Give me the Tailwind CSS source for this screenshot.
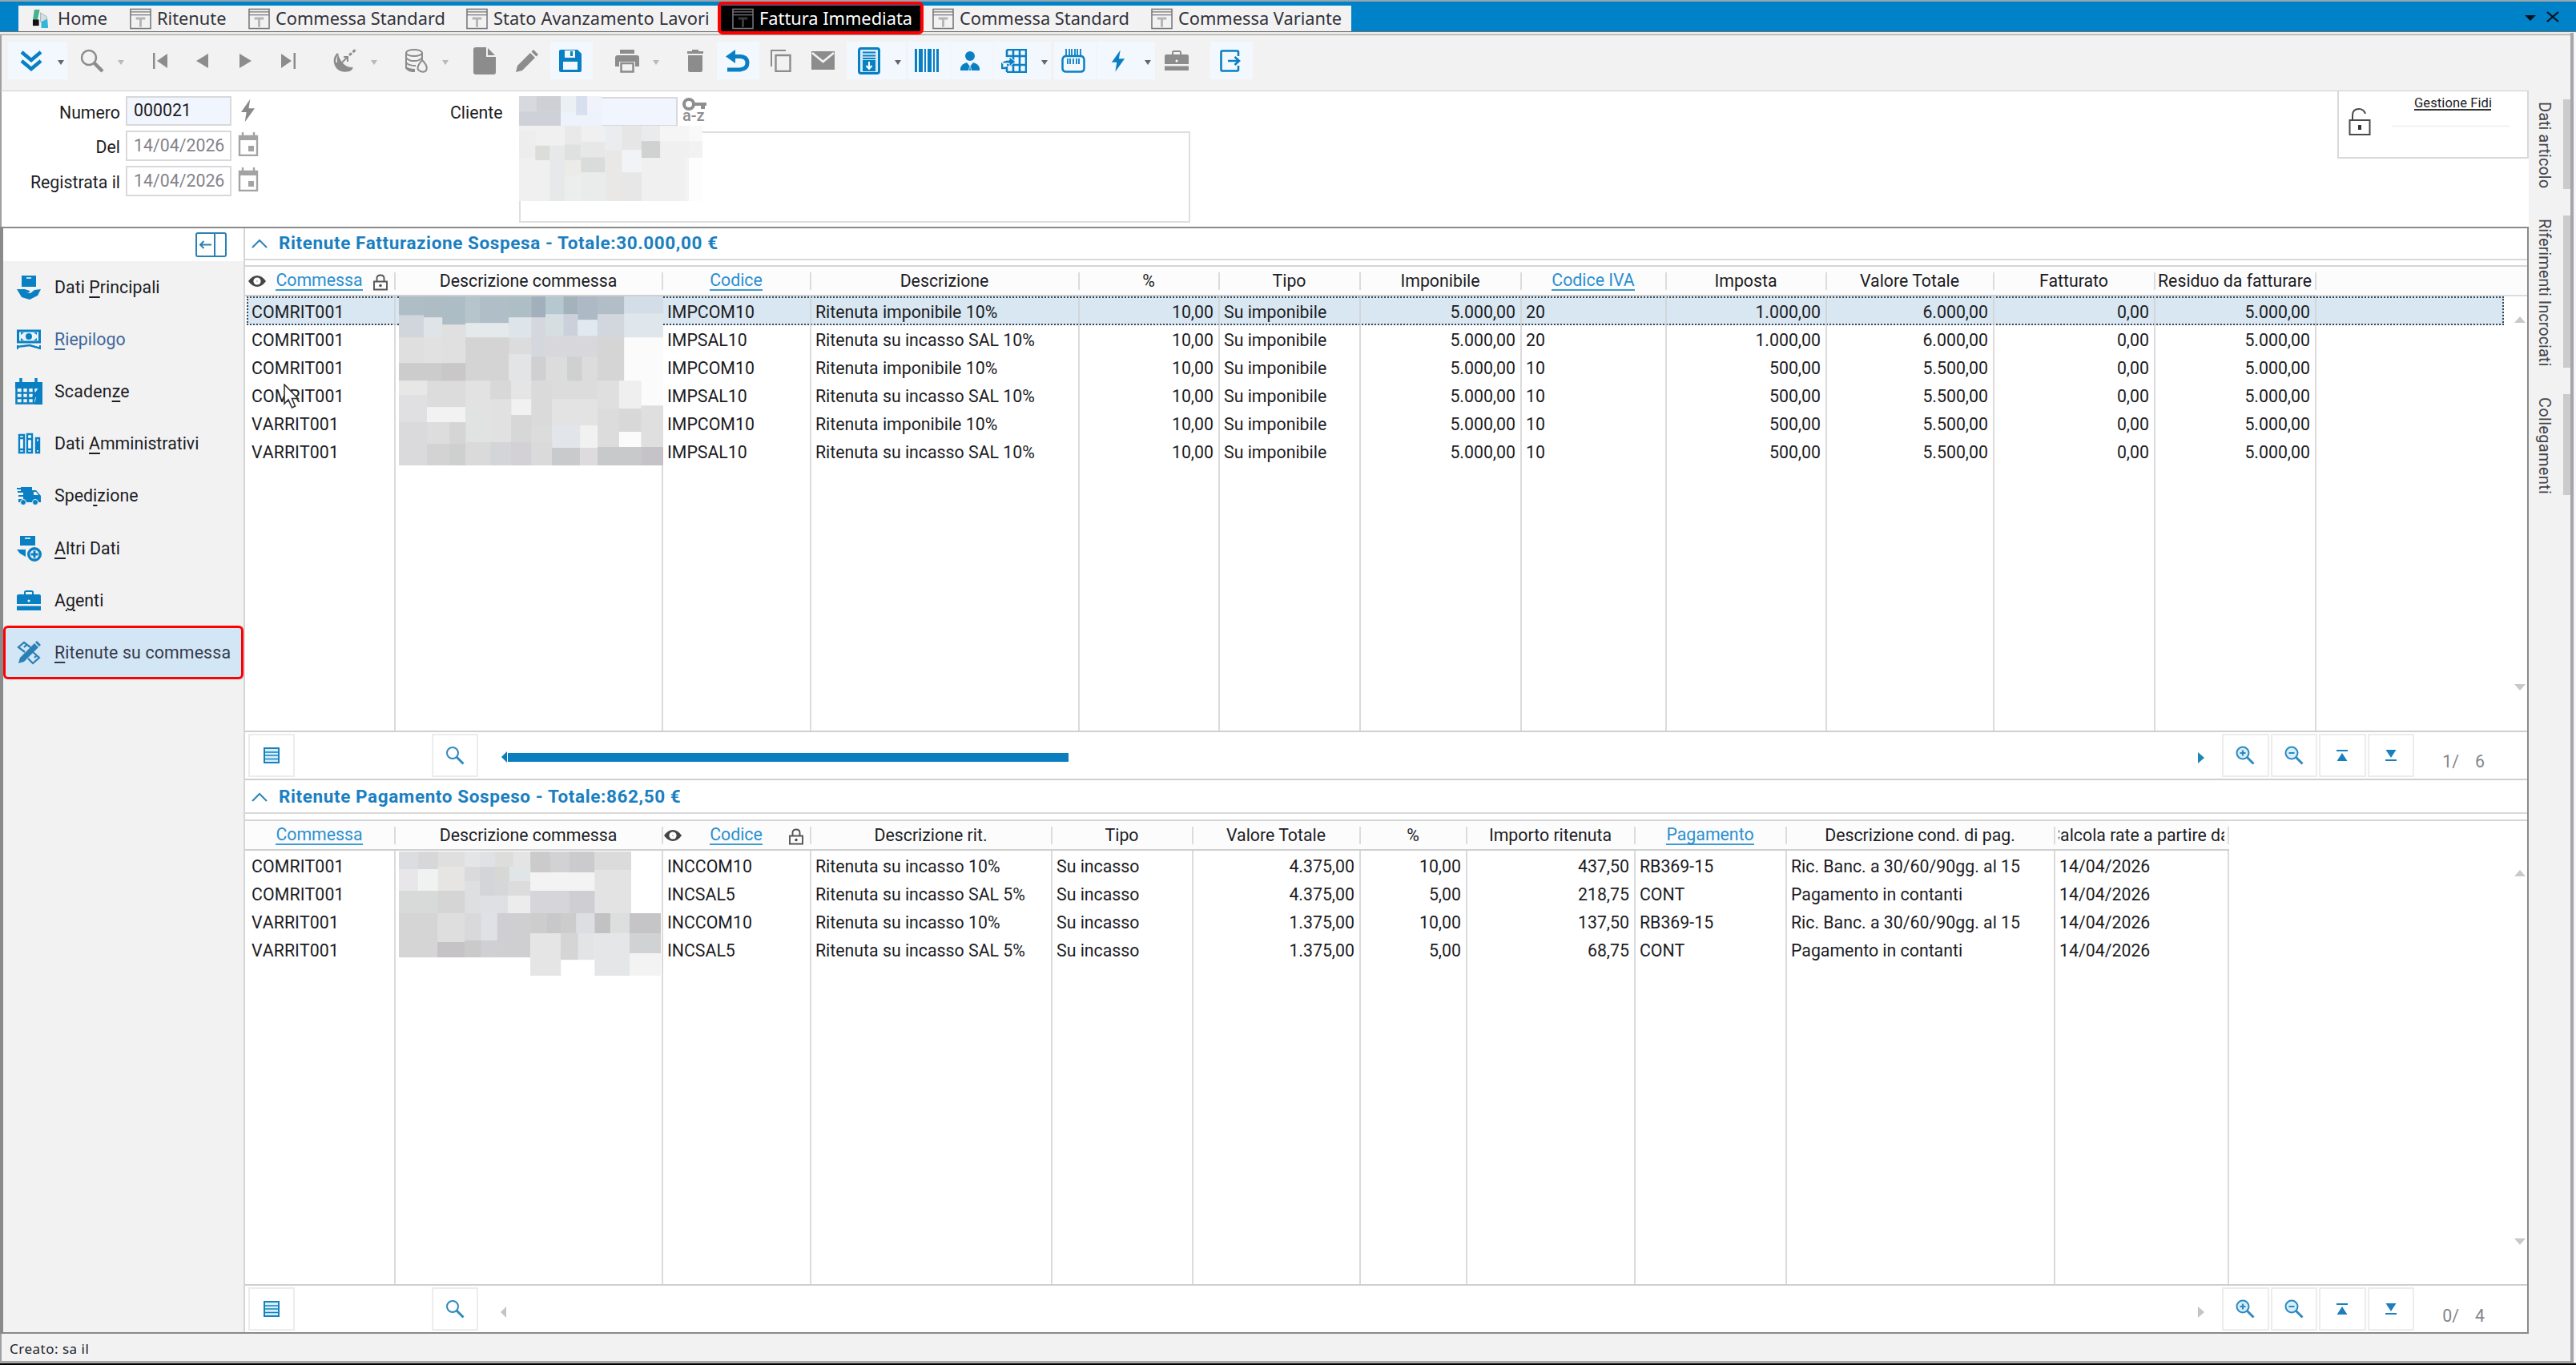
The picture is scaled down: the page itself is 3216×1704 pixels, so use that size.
<!DOCTYPE html>
<html lang="it">
  <head>
    <meta charset="UTF-8" />
    <meta name="viewport" content="width=device-width, initial-scale=1" />
    <title>Fattura Immediata</title>
    <script src="https://cdn.jsdelivr.net/npm/@tailwindcss/browser@4"></script>
  </head>
  <body class="bg-white">
    <!-- shared symbols -->
    <svg class="hidden">
      <symbol id="form" viewBox="0 0 28 27">
        <rect x="1" y="1" width="26" height="25" fill="none" stroke="currentColor" stroke-width="1.6" />
        <path d="M1 4.5H27M1 8.5H27" stroke="currentColor" stroke-width="1.4" />
        <path d="M8 13H20M14 13V24" stroke="currentColor" stroke-width="3" opacity=".5" />
      </symbol>
      <symbol id="bolt" viewBox="0 0 20 30"><path d="M13 0L1 17H8L6 30L19 12H11Z" fill="currentColor" /></symbol>
      <symbol id="calendar" viewBox="0 0 26 30">
        <path d="M2 5H24V29H2Z" fill="none" stroke="currentColor" stroke-width="2.4" />
        <path d="M1 4H25V10H1Z" fill="currentColor" />
        <path d="M6 0V5M20 0V5" stroke="currentColor" stroke-width="2.4" />
        <path d="M13 17H20V24H13Z" fill="currentColor" />
      </symbol>
      <symbol id="briefcase" viewBox="0 0 30 26">
        <path d="M10 5V2.5Q10 1 11.500 1H18.500Q20 1 20 2.500V5" fill="none" stroke="currentColor" stroke-width="2" />
        <path d="M2 5H28Q30 5 30 7V17H0V7Q0 5 2 5ZM0 19.500H30V25H0Z" fill="currentColor" />
        <circle cx="15" cy="13" r="1.500" fill="#fff" />
      </symbol>
      <symbol id="list" viewBox="0 0 20 20">
        <rect x="1" y="1" width="18" height="18" fill="#d3effb" stroke="#1681bd" stroke-width="2" />
        <path d="M1 6H19M1 10H19M1 14.500H19" stroke="#1681bd" stroke-width="1.700" />
      </symbol>
      <symbol id="search" viewBox="0 0 24 24">
        <circle cx="9" cy="9" r="7" fill="none" stroke="#2f88c0" stroke-width="2" />
        <path d="M14 14L22.500 22.500" stroke="#2f88c0" stroke-width="3" />
      </symbol>
      <symbol id="zoom-in" viewBox="0 0 24 24">
        <circle cx="9" cy="9" r="7.500" fill="#d5effb" stroke="#2f88c0" stroke-width="2" />
        <path d="M5.500 9H12.500M9 5.500V12.500" stroke="#2f88c0" stroke-width="2.200" />
        <path d="M14.500 14.500L22.500 22.500" stroke="#2f88c0" stroke-width="3" />
      </symbol>
      <symbol id="zoom-out" viewBox="0 0 24 24">
        <circle cx="9" cy="9" r="7.500" fill="#d5effb" stroke="#2f88c0" stroke-width="2" />
        <path d="M5.500 9H12.500" stroke="#2f88c0" stroke-width="2" />
        <path d="M14.500 14.500L22.500 22.500" stroke="#2f88c0" stroke-width="3" />
      </symbol>
      <symbol id="to-top" viewBox="0 0 14 14"><path d="M0 0H14V2H0ZM7 4L13.500 14H.5Z" fill="#1b7fbd" /></symbol>
      <symbol id="to-bottom" viewBox="0 0 14 14"><path d="M0 12H14V14H0ZM7 10L13.500 0H.5Z" fill="#1b7fbd" /></symbol>
      <symbol id="eye" viewBox="0 0 22 16">
        <path d="M0 8Q5 1 11 1T22 8Q17 15 11 15T0 8Z" fill="#444" />
        <circle cx="11" cy="8" r="4.600" fill="#fff" />
        <circle cx="11" cy="8" r="1" fill="#bbb" />
      </symbol>
      <symbol id="lock" viewBox="0 0 18 20">
        <path d="M1 9H17V19H1ZM4.500 9V5Q4.500 1 9 1T13.500 5V9" fill="none" stroke="#555" stroke-width="1.900" />
        <circle cx="9" cy="14" r="1.700" fill="#444" />
      </symbol>
      <symbol id="chevron" viewBox="0 0 20 12"><path d="M1 11L10 2L19 11" fill="none" stroke="#2c83bc" stroke-width="2" /></symbol>
    </svg>

    <div class="relative flex h-[1704px] w-[3216px] flex-col overflow-hidden border-t-2 border-[#9aa5aa] bg-[#f2f2f2] font-[Roboto,sans-serif] text-[21.3px] whitespace-nowrap text-[#1c1c24]">
      <!-- tabs -->
      <div class="flex h-[37px] shrink-0 bg-[#0082c8] pl-[23px]">
        <nav class="mt-[5px] flex h-8 w-[1664px] items-center bg-[#f2f2f2] font-['Noto_Sans',sans-serif] text-[21.800px] text-[#33333a]" id="tabs">
          <div class="flex w-[129px] items-center pl-[17px]">
            <svg class="mr-[9px] size-[23px]" viewBox="0 0 22 24"><path d="M2 0H9L6 14H0Z" fill="#44b38b" /><path d="M0 13H8V21H0Z" fill="#111" /><path d="M10 4L18 9V16H10Z" fill="#d8dcda" stroke="#9bb" /><path d="M11 16L19 12L20 24H11Z" fill="#33b6dc" /></svg>
            <span>Home</span>
          </div>
          <div class="flex w-[148px] items-center pl-[10px]"><svg class="mr-[7px] h-[27px] w-[27px] text-[#77777b]"><use href="#form" /></svg>Ritenute</div>
          <div class="flex w-[272px] items-center pl-[10px]"><svg class="mr-[7px] h-[27px] w-[27px] text-[#77777b]"><use href="#form" /></svg>Commessa Standard</div>
          <div class="flex w-[328px] items-center pl-[10px] tracking-[0.1px]"><svg class="mr-[7px] h-[27px] w-[27px] text-[#77777b]"><use href="#form" /></svg>Stato Avanzamento Lavori</div>
          <div class="relative flex h-8 w-[249px] items-center bg-black pl-[14px] text-white"><svg class="mr-[7px] h-[27px] w-[27px] text-[#77777b]"><use href="#form" /></svg>Fattura Immediata
            <div class="absolute -inset-x-[4px] -top-[5px] -bottom-[4px] rounded-md border-4 border-[#f00]"></div>
          </div>
          <div class="flex w-[272px] items-center pl-[15px]"><svg class="mr-[7px] h-[27px] w-[27px] text-[#77777b]"><use href="#form" /></svg>Commessa Standard</div>
          <div class="flex items-center pl-[16px]"><svg class="mr-[7px] h-[27px] w-[27px] text-[#77777b]"><use href="#form" /></svg>Commessa Variante</div>
        </nav>
        <div class="mr-[21px] ml-auto flex items-center gap-[13px]">
          <svg class="mt-1 h-[7px] w-[14px]" viewBox="0 0 14 7"><path d="M0 0H14L7 7Z" fill="#04121c" /></svg>
          <svg class="h-[14px] w-4" viewBox="0 0 16 14"><path d="M1 1L15 13M15 1L1 13" stroke="#04121c" stroke-width="2.200" /></svg>
        </div>
      </div>
      <div class="h-[5px] shrink-0 border-t border-b border-t-[#6f6f6f] border-b-[#9c9c9c] bg-[#e9e9e6]"></div>

      <!-- toolbar -->
      <div class="flex h-[69px] shrink-0 items-start border-l-2 border-[#a0a0a0] pt-[8px] pl-2 text-[#8c8c8c]">
        <div class="flex h-[47px] w-[74px] items-center bg-[#f3f8fe]">
          <div class="flex w-[58px] justify-center"><svg class="h-[26px] w-[28px]" viewBox="0 0 28 26"><path d="M2 2L14 12L26 2M2 13L14 23L26 13" fill="none" stroke="#0a80c4" stroke-width="4.500" /></svg></div>
          <svg class="mt-1 ml-1 h-[6px] w-2" viewBox="0 0 8 6"><path d="M0 0H8L4 6Z" fill="#666" /></svg>
        </div>
        <div class="ml-[3px] flex h-[47px] w-[74px] items-center">
          <div class="flex w-[56px] justify-center"><svg class="size-[30px]" viewBox="0 0 30 30"><circle cx="11" cy="11" r="9" fill="none" stroke="currentColor" stroke-width="2.500" /><path d="M17.500 17.500L28 28" stroke="currentColor" stroke-width="4.500" /></svg></div>
          <svg class="mt-1 ml-1 h-[6px] w-2" viewBox="0 0 8 6"><path d="M0 0H8L4 6Z" fill="#b9b9b9" /></svg>
        </div>
        <div class="ml-3 flex h-[47px] w-[53px] items-center justify-center"><svg class="h-[20px] w-[20px]" viewBox="0 0 20 20"><path d="M1 0H3.500V20H1ZM19 1V19L6 10Z" fill="currentColor" /></svg></div>
        <div class="flex h-[47px] w-[53px] items-center justify-center"><svg class="h-[20px] w-[16px]" viewBox="0 0 16 20"><path d="M15 1V19L0 10Z" fill="currentColor" /></svg></div>
        <div class="flex h-[47px] w-[53px] items-center justify-center"><svg class="h-[20px] w-[16px]" viewBox="0 0 16 20"><path d="M1 1V19L16 10Z" fill="currentColor" /></svg></div>
        <div class="flex h-[47px] w-[55px] items-center justify-center"><svg class="h-[20px] w-[20px]" viewBox="0 0 20 20"><path d="M19 0H16.500V20H19ZM1 1V19L14 10Z" fill="currentColor" /></svg></div>
        <div class="ml-4 flex h-[47px] w-[74px] items-center">
          <!-- satellite dish -->
          <div class="flex w-[56px] justify-center"><svg class="size-[30px]" viewBox="0 0 30 30"><path d="M6 6Q-1 13 4 22Q8 29 19 27Q24 25 23 23" fill="none" stroke="currentColor" stroke-width="2.500" /><path d="M2 17Q4 28 19 28L23 23Q12 23 6 7Q4 12 5 17Z" fill="currentColor" /><path d="M11 17L17 11M13 10H18V16" fill="none" stroke="currentColor" stroke-width="2" /><path d="M20 8L29 0" stroke="currentColor" stroke-width="3" stroke-dasharray="4 2" /></svg></div>
          <svg class="mt-1 ml-1 h-[6px] w-2" viewBox="0 0 8 6"><path d="M0 0H8L4 6Z" fill="#b9b9b9" /></svg>
        </div>
        <div class="ml-[15px] flex h-[47px] w-[74px] items-center">
          <!-- database -->
          <div class="flex w-[56px] justify-center"><svg class="size-[30px]" viewBox="0 0 30 30"><g fill="none" stroke="currentColor" stroke-width="2"><ellipse cx="12" cy="5" rx="10" ry="4" /><path d="M2 5V24Q5 28 13 28M22 5V13M2 11Q5 15 12 15T22 11M2 17Q5 21 14 21M2 23Q5 26 13 26" /><path d="M22 14Q15 22 17 26Q21 30 26 28Q31 23 22 14Z" /></g></svg></div>
          <svg class="mt-1 ml-1 h-[6px] w-2" viewBox="0 0 8 6"><path d="M0 0H8L4 6Z" fill="#b9b9b9" /></svg>
        </div>
        <div class="ml-3 flex h-[47px] w-[53px] items-center justify-center"><svg class="h-[34px] w-[28px]" viewBox="0 0 28 34"><path d="M3 0H16V12H28V31Q28 34 25 34H3Q0 34 0 31V3Q0 0 3 0ZM18 1L27 10H18Z" fill="currentColor" /></svg></div>
        <div class="flex h-[47px] w-[53px] items-center justify-center"><svg class="size-[28px]" viewBox="0 0 28 28"><path d="M0 28L2 20L18 4L24 10L8 26ZM19.500 2.500L22 0L28 6L25.500 8.500Z" fill="currentColor" /></svg></div>
        <div class="ml-[3px] flex h-[47px] w-[53px] items-center justify-center bg-[#f3f8fe]"><svg class="mr-[3px] size-[28px]" viewBox="0 0 28 28"><path d="M2 0H23L28 5V26Q28 28 26 28H2Q0 28 0 26V2Q0 0 2 0Z" fill="#0a80c4" /><path d="M7 1H20V10H7ZM5 15H23V25H5Z" fill="#f3f8fe" /><path d="M14 2H17V8H14Z" fill="#0a80c4" /></svg></div>
        <div class="ml-[15px] flex h-[47px] w-[74px] items-center">
          <div class="flex w-[56px] justify-center"><svg class="size-[30px]" viewBox="0 0 30 30"><path d="M6 1H24V6H6ZM3 8H27Q30 8 30 11V22H25V16H5V22H0V11Q0 8 3 8Z" fill="currentColor" /><path d="M7.500 18H22.500V28.500H7.500Z" fill="none" stroke="currentColor" stroke-width="2.500" /></svg></div>
          <svg class="mt-1 ml-1 h-[6px] w-2" viewBox="0 0 8 6"><path d="M0 0H8L4 6Z" fill="#b9b9b9" /></svg>
        </div>
        <div class="ml-3 flex h-[47px] w-[53px] items-center justify-center"><svg class="h-[28px] w-[20px]" viewBox="0 0 20 28"><path d="M0 2H6V0H14V2H20V5H0ZM1 7H19V25Q19 28 17 28H3Q1 28 1 25Z" fill="currentColor" /></svg></div>
        <div class="ml-px flex h-[47px] w-[53px] items-center justify-center bg-[#f3f8fe]"><svg class="mr-[2px] h-[28px] w-[30px]" viewBox="0 0 30 28"><path d="M2 25H18Q27 24 27 16.500T18 8.500H8" fill="none" stroke="#0a80c4" stroke-width="5" /><path d="M0 8.500L12 0V17Z" fill="#0a80c4" /></svg></div>
        <div class="flex h-[47px] w-[53px] items-center justify-center"><svg class="h-[28px] w-[26px]" viewBox="0 0 26 28"><path d="M1 21V1H19" fill="none" stroke="currentColor" stroke-width="2" /><path d="M6.500 7H24.500V27H6.500Z" fill="none" stroke="currentColor" stroke-width="2.400" /></svg></div>
        <div class="flex h-[47px] w-[53px] items-center justify-center"><svg class="h-[23px] w-[29px]" viewBox="0 0 29 23"><path d="M0 0H29V23H0Z" fill="currentColor" /><path d="M1 2L14.500 13L28 2" fill="none" stroke="#f2f2f2" stroke-width="2.600" /></svg></div>
        <div class="ml-[3px] flex h-[47px] w-[74px] items-center bg-[#f3f8fe]">
          <div class="flex w-[56px] justify-center"><svg class="h-[34px] w-[28px]" viewBox="0 0 28 34"><path d="M4 1.500H24Q26.500 1.500 26.500 4V30Q26.500 32.500 24 32.500H4Q1.500 32.500 1.500 30V4Q1.500 1.500 4 1.500Z" fill="#d7ebf8" stroke="#0a80c4" stroke-width="3" /><path d="M6 6.500H22M6 10.500H22M6 14H22" stroke="#0a80c4" stroke-width="2" /><path d="M6 16H22V30H6Z" fill="#0a80c4" /><path d="M14 18V26M10.500 23L14 27L17.500 23" fill="none" stroke="#fff" stroke-width="2" /></svg></div>
          <svg class="mt-1 ml-1 h-[6px] w-2" viewBox="0 0 8 6"><path d="M0 0H8L4 6Z" fill="#666" /></svg>
        </div>
        <div class="ml-[2px] flex h-[47px] w-[53px] items-center justify-center bg-[#f3f8fe]"><svg class="mr-[5px] h-[29px] w-[30px]" viewBox="0 0 30 29"><path d="M0 0H3V29H0ZM5 0H10V29H5ZM12 0H14V29H12ZM16 0H21V29H16ZM23 0H25V29H23ZM27 0H30V29H27Z" fill="#0a80c4" /></svg></div>
        <div class="ml-px flex h-[47px] w-[53px] items-center justify-center bg-[#f3f8fe]"><svg class="mr-[5px] size-[24px]" viewBox="0 0 24 24"><circle cx="12" cy="6" r="6" fill="#0a80c4" /><path d="M0 24V21Q1 16 8 14L12 19L16 14Q23 16 24 21V24Z" fill="#0a80c4" /><path d="M12 15L14 24H10Z" fill="#f3f8fe" /><path d="M12 17L13 24H11Z" fill="#0a80c4" /></svg></div>
        <div class="ml-px flex h-[47px] w-[71px] items-center bg-[#f3f8fe]">
          <div class="flex w-[50px] justify-center"><svg class="h-[30px] w-[32px]" viewBox="0 0 32 30"><path d="M7 1H31V29H7M7 9H31M7 20H31M15 1V29M23 1V29M7 1V10M7 22V29M1 17V24H7" fill="none" stroke="#0a80c4" stroke-width="2.600" /><path d="M1 18Q2 14 10 14V10L18 16L10 22V18Z" fill="#0a80c4" stroke="#f3f8fe" /></svg></div>
          <svg class="mt-1 ml-[9px] h-[6px] w-2" viewBox="0 0 8 6"><path d="M0 0H8L4 6Z" fill="#666" /></svg>
        </div>
        <div class="ml-1 flex h-[47px] w-[52px] items-center justify-center bg-[#f3f8fe]"><svg class="mr-[4px] size-[30px]" viewBox="0 0 30 30"><path d="M6 0V10M10 0V10M13 0V10M17 0V10M20 0V10M24 0V10M8 12V19M11 12V19M15 12V19M19 12V19M22 12V19" stroke="#0a80c4" stroke-width="1.800" /><path d="M5 9H25Q28.500 10 28.500 14V24Q28.500 28.500 24 28.500H6Q1.500 28.500 1.500 24V14Q1.500 10 5 9Z" fill="none" stroke="#0a80c4" stroke-width="2.500" /></svg></div>
        <div class="ml-px flex h-[47px] w-[73px] items-center bg-[#f3f8fe]">
          <div class="flex w-[56px] justify-center"><svg class="mr-[2px] h-[28px] w-[18px] text-[#0a80c4]"><use href="#bolt" /></svg></div>
          <svg class="mt-1 ml-1 h-[6px] w-2" viewBox="0 0 8 6"><path d="M0 0H8L4 6Z" fill="#666" /></svg>
        </div>
        <div class="flex h-[47px] w-[53px] items-center justify-center"><svg class="h-[26px] w-[30px]"><use href="#briefcase" /></svg></div>
        <div class="ml-4 flex h-[47px] w-[53px] items-center justify-center bg-[#f3f8fe]"><svg class="mr-[3px] h-[28px] w-[26px]" viewBox="0 0 26 28"><path d="M23 8V3Q23 1.500 21.500 1.500H3Q1.500 1.500 1.500 3V25Q1.500 26.500 3 26.500H21.500Q23 26.500 23 25V20" fill="none" stroke="#0a80c4" stroke-width="2.600" /><path d="M10 14H24M18.500 9L24 14L18.500 19" fill="none" stroke="#0a80c4" stroke-width="2.600" /></svg></div>
      </div>

      <div class="flex h-[1552px] shrink-0">
        <div class="flex w-[3157px] shrink-0 flex-col">
          <!-- document header -->
          <div class="flex h-[170px] shrink-0 border-t border-l-2 border-t-[#cfcfcf] border-l-[#a0a0a0] bg-white">
            <div class="flex flex-col pt-[6px]">
              <div class="flex h-[43px]"><div class="w-[148px] pt-[5px] text-right">Numero</div><div class="ml-[7px] h-[37px] w-[132px] border-2 border-[#d9d9dc] bg-[#f1f5fd] pl-2">000021</div><svg class="mt-[3px] ml-[11px] h-[30px] w-[19px] text-[#8a8a8a]"><use href="#bolt" /></svg></div>
              <div class="flex h-[44px]"><div class="w-[148px] pt-[5px] text-right">Del</div><div class="ml-[7px] h-[38px] w-[132px] border-2 border-[#d9d9dc] pt-[1px] pl-[8px] text-[#83838a]">14/04/2026</div><svg class="mt-[2px] ml-[8px] h-[30px] w-[26px] text-[#a3a3a3]"><use href="#calendar" /></svg></div>
              <div class="flex h-[44px]"><div class="w-[148px] pt-[5px] text-right">Registrata il</div><div class="ml-[7px] h-[38px] w-[132px] border-2 border-[#d9d9dc] pt-[1px] pl-[8px] text-[#83838a]">14/04/2026</div><svg class="mt-[2px] ml-[8px] h-[30px] w-[26px] text-[#a3a3a3]"><use href="#calendar" /></svg></div>
            </div>
            <div class="mt-[11px] ml-auto w-[66px] pr-0">Cliente</div>
            <div class="relative mt-[7px] ml-[20px] w-[838px]">
              <div class="flex h-[43px]">
                <div class="h-[37px] w-[198px] border-2 border-[#d9d9dc] bg-[#f1f5fd]"></div>
                <div class="ml-[6px] flex w-[30px] flex-col text-[#8e8e8e]">
                  <svg class="mt-[1px] h-[16px] w-[30px]" viewBox="0 0 30 16"><circle cx="8" cy="8" r="6" fill="none" stroke="currentColor" stroke-width="4" /><path d="M14 6H30V10H28V14H23V10H14Z" fill="currentColor" /></svg>
                  <span class="-mt-[4px] text-[20px] leading-[20px] font-medium">a-z</span>
                </div>
              </div>
              <div class="h-[114px] border-2 border-[#dedede]"></div>
              <svg class="absolute -top-[1px] left-0 h-[131px] w-[229px]" viewBox="1181 360 418 392" preserveAspectRatio="none" id="customer-mask"></svg>
            </div>
            <div class="ml-[1432px] flex h-[84px] w-[239px] border-2 border-t-0 border-[#d9d9dc]">
              <svg class="mt-[20px] ml-[12px] h-[36px] w-[28px]" viewBox="0 0 28 36"><path d="M1.500 16H26.500V34H1.500ZM5 16V10Q5 2 13 2Q19 2 21 8" fill="none" stroke="#4a4a4a" stroke-width="2" /><path d="M12 22H16V28H12Z" fill="#333" /></svg>
              <div class="pt-[4px]">
                <div class="ml-[54px] h-[20px] w-[96px] border-b-2 border-[#333] text-[16.500px] leading-[22px] tracking-[0.1px]">Gestione Fidi</div>
                <div class="mt-[18px] ml-[26px] h-[3px] w-[148px] bg-[#f6f6f6]"></div>
              </div>
            </div>
          </div>

          <div class="flex h-[1382px] border-t-2 border-r-2 border-b-2 border-l-4 border-[#8a8a8a] bg-white">
            <!-- sections menu -->
            <aside class="flex w-[302px] shrink-0 flex-col border-r-2 border-[#d5d5d5] bg-[#f2f2f2] tracking-[0.050px]">
              <div class="h-[41px] bg-white">
                <svg class="mt-[5px] ml-[240px] h-[31px] w-[39px]" viewBox="0 0 39 31"><rect x="1" y="1" width="37" height="29" rx="2" fill="#fff" stroke="#2a7fb4" stroke-width="2" /><path d="M24 1V30M20 15.500H6M10.500 11L6 15.500L10.500 20" fill="none" stroke="#2a7fb4" stroke-width="2" /></svg>
              </div>
              <a class="flex h-[65.200px] items-center pl-[17px]"><svg class="mr-[17px] size-[30px] text-[#0a80c4]" viewBox="0 0 30 30"><path d="M6 0H24V14H6Z" fill="currentColor" /><path d="M12 3H18" stroke="#fff" stroke-width="1.500" /><path d="M0 17H10L16 19Q17 22 11 22H17L22 18L30 17L26 25L16 30L6 27L3 22Z" fill="currentColor" /></svg><span>Dati <u class="underline-offset-4">P</u>rincipali</span></a>
              <a class="flex h-[65.200px] items-center pl-[17px] text-[#40679a]"><svg class="mr-[17px] size-[30px] text-[#0a80c4]" viewBox="0 0 30 30"><path d="M1.500 4H28.500V18H1.500Z" fill="#e8f4fb" stroke="currentColor" stroke-width="3" /><path d="M5 6H9L5 9ZM25 6H21L25 9ZM5 16H9L5 13ZM25 16H21L25 13Z" fill="currentColor" /><circle cx="15" cy="11" r="4" fill="currentColor" /><path d="M0 24L16 22L30 26" fill="none" stroke="currentColor" stroke-width="2.500" /><path d="M1 22V27M29 22V27" stroke="currentColor" stroke-width="2" /></svg><span><u class="underline-offset-4">R</u>iepilogo</span></a>
              <a class="flex h-[65.200px] items-center pl-[14px]"><svg class="mr-[14px] h-[34px] w-[36px] text-[#0a80c4]" viewBox="0 0 36 34"><path d="M1 5H35V13H1Z" fill="currentColor" /><path d="M8 0V6M27 0V6" stroke="currentColor" stroke-width="3.500" /><path d="M2.500 12V31.500H33.500V12M2 18.500H26M2 25H26M10 12V32M17 12V32M24 12V32" fill="none" stroke="currentColor" stroke-width="2.600" /><path d="M30 12L22 24H27L25 33H35V12Z" fill="currentColor" /></svg><span class="tracking-[0.2px]">Scaden<u class="underline-offset-4">z</u>e</span></a>
              <a class="flex h-[65.200px] items-center pl-[17px]"><svg class="mr-[17px] size-[30px] text-[#0a80c4]" viewBox="0 0 30 30"><path d="M3 4H9V26H3ZM13 3H19V26H13ZM24 8H28V26H24Z" fill="#fff" stroke="currentColor" stroke-width="2.400" /><path d="M3 8H9M13 9H19M23 13H28M3 22H9M13 22H19" stroke="currentColor" stroke-width="2.400" /><path d="M24 13H28V23H24Z" fill="currentColor" /></svg><span class="tracking-normal">Dati <u class="underline-offset-4">A</u>mministrativi</span></a>
              <a class="flex h-[65.200px] items-center pl-[17px]"><svg class="mr-[17px] size-[30px] text-[#0a80c4]" viewBox="0 0 30 30"><path d="M5 4H19V8H24L30 15V23H2V19H8V16H2V14H8V11H5Z" fill="currentColor" /><path d="M0 6H8M1 10H8" stroke="currentColor" stroke-width="2" /><path d="M21 10H24L27 14H21Z" fill="#f2f2f2" /><circle cx="8" cy="23" r="3.500" fill="currentColor" stroke="#f2f2f2" /><circle cx="23" cy="23" r="3.500" fill="currentColor" stroke="#f2f2f2" /></svg><span>Sped<u class="underline-offset-4">i</u>zione</span></a>
              <a class="flex h-[65.200px] items-center pl-[17px]"><svg class="mr-[17px] h-[32px] w-[31px] text-[#0a80c4]" viewBox="0 0 31 32"><path d="M4 0H23V12H4Z" fill="currentColor" /><path d="M10 3H17" stroke="#fff" stroke-width="1.500" /><path d="M0 17H11V26L4 22Z" fill="currentColor" /><circle cx="22" cy="23" r="7.300" fill="#f2f2f2" stroke="currentColor" stroke-width="3.400" /><path d="M17.500 23H26.500M22 18.500V27.500" stroke="currentColor" stroke-width="3" /></svg><span class="-ml-px"><u class="underline-offset-4">A</u>ltri Dati</span></a>
              <a class="flex h-[65.200px] items-center pl-[17px]"><svg class="mr-[17px] h-[26px] w-[30px] text-[#0a80c4]"><use href="#briefcase" /></svg><span>A<u class="underline-offset-4">g</u>enti</span></a>
              <a class="relative flex h-[65.200px] items-center bg-[#d3e6f5] pl-[17px] text-[#34394a]"><svg class="mr-[17px] size-[30px] text-[#2a7fb4]" viewBox="0 0 30 30"><path d="M2 28L4 21L22 3L27 8L9 26ZM23 2L25 0L30 5L28 7Z" fill="currentColor" /><path d="M10 14L2 8L9 2L17 8M12 5L9 8M20 14L28 21L20 28L14 22M25 18L22 21" fill="none" stroke="currentColor" stroke-width="2.200" /></svg><span class="tracking-[0.150px]"><u class="underline-offset-4">R</u>itenute su commessa</span>
                <div class="absolute inset-x-0 -top-[1px] bottom-0 rounded-md border-[3.500px] border-[#f00]"></div>
              </a>
            </aside>

            <main class="flex w-[2849px] flex-col">
              <!-- invoicing retentions -->
              <section class="relative flex h-[689px] flex-col border-b-2 border-[#cfcfcf]">
                <h2 class="flex h-[40px] shrink-0 items-center border-b-2 border-[#d9d9d9] pl-[8px] text-[22.500px] font-bold text-[#1a7fc1]"><svg class="mr-[14px] h-3 w-5"><use href="#chevron" /></svg><span class="tracking-[0.600px]">Ritenute Fatturazione Sospesa - Totale:30.000,00 €</span></h2>
                <div class="mt-[6px] h-[2px] shrink-0 bg-[#d5d5d5]"></div>
                <div class="relative flex h-[580px]" id="grid-invoicing"></div>
                <div class="flex h-[60px] border-t-2 border-[#cfcfcf] pt-[2px] pl-[4px]">
                  <div class="flex h-[54px] w-[58px] items-center justify-center border-2 border-[#ececec]"><svg class="size-5"><use href="#list" /></svg></div>
                  <div class="ml-[171px] flex h-[54px] w-[58px] items-center justify-center border-2 border-[#ececec]"><svg class="size-6"><use href="#search" /></svg></div>
                  <svg class="mt-[22px] ml-[29px] h-[14px] w-[7px]" viewBox="0 0 7 14"><path d="M7 0V14L0 7Z" fill="#0a7ab8" /></svg>
                  <div class="mt-[24px] ml-px h-[11px] w-[700px] bg-[#0a7fc0]"></div>
                  <svg class="mt-[23px] ml-auto h-[14px] w-[8px]" viewBox="0 0 8 14"><path d="M0 0V14L8 7Z" fill="#1b86b8" /></svg>
                  <div class="mr-[141px] ml-[22px] flex gap-[2px]">
                    <div class="flex h-[54px] w-[58.500px] items-center justify-center border-2 border-[#ececec]"><svg class="size-6"><use href="#zoom-in" /></svg></div>
                    <div class="flex h-[54px] w-[58.500px] items-center justify-center border-2 border-[#ececec]"><svg class="size-6"><use href="#zoom-out" /></svg></div>
                    <div class="flex h-[54px] w-[58.500px] items-center justify-center border-2 border-[#ececec]"><svg class="size-[14px]"><use href="#to-top" /></svg></div>
                    <div class="flex h-[54px] w-[58.500px] items-center justify-center border-2 border-[#ececec]"><svg class="size-[14px]"><use href="#to-bottom" /></svg></div>
                  </div>
                  <div class="absolute right-[53px] bottom-[5px] flex gap-[20px] text-[#85858c]"><span>1/</span><span>6</span></div>
                </div>
                <svg class="absolute top-[110px] right-[2px] h-[8px] w-[14px]" viewBox="0 0 14 8"><path d="M0 8H14L7 0Z" fill="#c9c9c9" /></svg>
                <svg class="absolute top-[569px] right-[2px] h-[8px] w-[14px]" viewBox="0 0 14 8"><path d="M0 0H14L7 8Z" fill="#c9c9c9" /></svg>
              </section>

              <!-- payment retentions -->
              <section class="relative flex h-[689px] flex-col">
                <h2 class="flex h-[42px] shrink-0 items-center border-b-2 border-[#d9d9d9] pt-[2px] pl-[8px] text-[22.500px] font-bold text-[#1a7fc1]"><svg class="mr-[14px] h-3 w-5"><use href="#chevron" /></svg><span class="tracking-[0.600px]">Ritenute Pagamento Sospeso - Totale:862,50 €</span></h2>
                <div class="mt-[7px] h-[2px] shrink-0 bg-[#d5d5d5]"></div>
                <div class="relative flex h-[579px]" id="grid-payment"></div>
                <div class="flex h-[60px] border-t-2 border-[#cfcfcf] pt-[2px] pl-[4px]">
                  <div class="flex h-[54px] w-[58px] items-center justify-center border-2 border-[#ececec]"><svg class="size-5"><use href="#list" /></svg></div>
                  <div class="ml-[171px] flex h-[54px] w-[58px] items-center justify-center border-2 border-[#ececec]"><svg class="size-6"><use href="#search" /></svg></div>
                  <svg class="mt-[24px] ml-[28px] h-[14px] w-[7px]" viewBox="0 0 7 14"><path d="M7 0V14L0 7Z" fill="#c4c4c4" /></svg>
                  <svg class="mt-[24px] ml-auto h-[14px] w-[8px]" viewBox="0 0 8 14"><path d="M0 0V14L8 7Z" fill="#c4c4c4" /></svg>
                  <div class="mr-[141px] ml-[22px] flex gap-[2px]">
                    <div class="flex h-[54px] w-[58.500px] items-center justify-center border-2 border-[#ececec]"><svg class="size-6"><use href="#zoom-in" /></svg></div>
                    <div class="flex h-[54px] w-[58.500px] items-center justify-center border-2 border-[#ececec]"><svg class="size-6"><use href="#zoom-out" /></svg></div>
                    <div class="flex h-[54px] w-[58.500px] items-center justify-center border-2 border-[#ececec]"><svg class="size-[14px]"><use href="#to-top" /></svg></div>
                    <div class="flex h-[54px] w-[58.500px] items-center justify-center border-2 border-[#ececec]"><svg class="size-[14px]"><use href="#to-bottom" /></svg></div>
                  </div>
                  <div class="absolute right-[53px] bottom-[4px] flex gap-[20px] text-[#85858c]"><span>0/</span><span>4</span></div>
                </div>
                <svg class="absolute top-[112px] right-[2px] h-[8px] w-[14px]" viewBox="0 0 14 8"><path d="M0 8H14L7 0Z" fill="#c9c9c9" /></svg>
                <svg class="absolute top-[572px] right-[2px] h-[8px] w-[14px]" viewBox="0 0 14 8"><path d="M0 0H14L7 8Z" fill="#c9c9c9" /></svg>
              </section>
            </main>
          </div>
        </div>

        <!-- docked side tabs -->
        <div class="flex w-[53px] flex-col pt-[11px] pl-[5px] text-[20px] text-[#44444a] [&_span]:[writing-mode:vertical-rl]">
          <div class="flex h-[112px] items-center justify-between border-r-[10px] border-[#cbcbcb] pt-[2px]"><span>Dati articolo</span></div>
          <div class="mt-[33px] flex h-[190px] items-center border-r-[10px] border-[#cbcbcb] pt-[2px]"><span>Riferimenti Incrociati</span></div>
          <div class="mt-[33px] flex h-[126px] items-center border-r-[10px] border-[#cbcbcb] pt-[3px]"><span class="tracking-[0.300px]">Collegamenti</span></div>
        </div>
      </div>

      <footer class="flex h-[34px] shrink-0 items-center border-l-2 border-[#a0a0a0] pt-[3px] pl-[10px] font-['Noto_Sans',sans-serif] text-[17px] tracking-[0.500px] text-[#22222a]">Creato: sa il</footer>
      <div class="h-[5px] shrink-0 border-b-2 border-black bg-[#a6a6a6]"></div>
      <div class="absolute top-[39px] right-0 bottom-[3px] w-[7px] border-l-4 border-[#a6a6a6] bg-[#f6f6fc]"></div>
      <!-- mouse pointer -->
      <svg class="absolute top-[477px] left-[354px] h-[32px] w-[20px]" viewBox="0 0 20 32"><path d="M1 1V25L6 20L10.500 30L14.500 28L10.500 18.500H18Z" fill="#fff" stroke="#333" stroke-width="1.600" /></svg>
    </div>

    <script>
      const invoicing = [
        { w: 188, title: "Commessa", link: 1, eye: 1, lock: 1, rows: ["COMRIT001", "COMRIT001", "COMRIT001", "COMRIT001", "VARRIT001", "VARRIT001"] },
        { w: 334, title: "Descrizione commessa", rows: [] },
        { w: 185, title: "Codice", link: 1, rows: ["IMPCOM10", "IMPSAL10", "IMPCOM10", "IMPSAL10", "IMPCOM10", "IMPSAL10"] },
        { w: 335, title: "Descrizione", rows: ["Ritenuta imponibile 10%", "Ritenuta su incasso SAL 10%", "Ritenuta imponibile 10%", "Ritenuta su incasso SAL 10%", "Ritenuta imponibile 10%", "Ritenuta su incasso SAL 10%"] },
        { w: 175, title: "%", right: 1, rows: Array(6).fill("10,00") },
        { w: 176, title: "Tipo", rows: Array(6).fill("Su imponibile") },
        { w: 201, title: "Imponibile", right: 1, rows: Array(6).fill("5.000,00") },
        { w: 181, title: "Codice IVA", link: 1, rows: ["20", "20", "10", "10", "10", "10"] },
        { w: 200, title: "Imposta", right: 1, rows: ["1.000,00", "1.000,00", "500,00", "500,00", "500,00", "500,00"] },
        { w: 209, title: "Valore Totale", right: 1, rows: ["6.000,00", "6.000,00", "5.500,00", "5.500,00", "5.500,00", "5.500,00"] },
        { w: 201, title: "Fatturato", right: 1, rows: Array(6).fill("0,00") },
        { w: 201, title: "Residuo da fatturare", right: 1, rows: Array(6).fill("5.000,00") },
      ];
      const payment = [
        { w: 188, title: "Commessa", link: 1, rows: ["COMRIT001", "COMRIT001", "VARRIT001", "VARRIT001"] },
        { w: 334, title: "Descrizione commessa", rows: [] },
        { w: 185, title: "Codice", link: 1, eye: 1, lock: 1, rows: ["INCCOM10", "INCSAL5", "INCCOM10", "INCSAL5"] },
        { w: 301, title: "Descrizione rit.", rows: ["Ritenuta su incasso 10%", "Ritenuta su incasso SAL 5%", "Ritenuta su incasso 10%", "Ritenuta su incasso SAL 5%"] },
        { w: 176, title: "Tipo", rows: Array(4).fill("Su incasso") },
        { w: 209, title: "Valore Totale", right: 1, rows: ["4.375,00", "4.375,00", "1.375,00", "1.375,00"] },
        { w: 133, title: "%", right: 1, rows: ["10,00", "5,00", "10,00", "5,00"] },
        { w: 210, title: "Importo ritenuta", right: 1, rows: ["437,50", "218,75", "137,50", "68,75"] },
        { w: 189, title: "Pagamento", link: 1, rows: ["RB369-15", "CONT", "RB369-15", "CONT"] },
        { w: 335, title: "Descrizione cond. di pag.", rows: ["Ric. Banc. a 30/60/90gg. al 15", "Pagamento in contanti", "Ric. Banc. a 30/60/90gg. al 15", "Pagamento in contanti"] },
        { w: 217, title: "Calcola rate a partire dal", rows: Array(4).fill("14/04/2026") },
      ];

      // x, y, width, height, colour
      const customerMask = [
        [1181,360,39,57,"#d8d9df"],[1220,360,56,57,"#ced0d6"],[1181,417,95,54,"#cfd1d8"],[1276,360,35,57,"#ebf0f5"],[1276,417,93,54,"#edf2fb"],[1311,360,25,70,"#d8dfef"],[1336,360,33,57,"#f0f3fb"],
        [1181,471,387,281,"#f0f0f0"],[1568,471,31,57,"#f9f9f9"],[1568,528,31,62,"#f2f2f2"],[1559,590,9,162,"#f3f3f3"],[1568,590,31,162,"#fdfdfd"],
        [1181,490,37,100,"#ededed"],[1218,545,33,54,"#dcdcd9"],[1251,545,34,207,"#e6e8ea"],[1285,540,37,60,"#dfe1e1"],[1285,471,37,69,"#e9e9ea"],[1285,600,37,57,"#ecebe8"],[1322,588,55,57,"#dadcdb"],[1322,531,55,57,"#e7e7e7"],[1377,471,38,90,"#eaedf0"],[1415,471,45,90,"#e6e6e6"],[1415,561,45,84,"#f1f3f6"],[1377,561,38,191,"#e9e8e7"],[1415,645,45,107,"#e7e7e7"],[1460,471,42,57,"#eaebed"],[1460,528,42,62,"#cfd2d1"],[1502,471,66,57,"#f5f5f5"],[1322,645,55,107,"#eaebeb"],[1285,657,37,95,"#eceded"],
      ];
      const invoicingMask = [
        [31,299,575,634,"#dcdcdd"],
        [31,299,54,71,"#afbec6"],[85,299,40,79,"#aebdc4"],[125,299,51,106,"#adbdc6"],[176,299,31,100,"#b6c5cc"],[207,299,63,100,"#b0bec8"],[270,299,49,79,"#adbfc4"],[319,299,31,79,"#a2b0bd"],[350,299,39,67,"#b6c8cf"],[389,299,31,67,"#a4b2bc"],[420,299,43,88,"#adb9c5"],[463,299,58,67,"#b1bdc7"],[521,299,85,64,"#d3dde7"],
        [31,370,54,83,"#d0d6db"],[85,378,40,75,"#dfe4e9"],[176,399,94,54,"#e4e9eb"],[270,378,49,75,"#dde5ea"],[319,378,31,147,"#d5d7de"],[350,366,39,81,"#d5dfe1"],[389,366,31,81,"#cbd0db"],[420,387,43,60,"#e1e9f0"],[463,366,58,87,"#d2d6dd"],[521,363,85,90,"#dfe7ed"],
        [31,453,54,96,"#dfdfdf"],[85,453,40,96,"#e1e1e2"],[125,405,51,144,"#e1e0e0"],[176,453,94,162,"#d4d4d4"],[350,447,113,78,"#d8d8dc"],[31,549,94,66,"#cdcccc"],[125,549,51,66,"#c9c7c8"],[270,516,49,99,"#e3e4e6"],[319,525,31,90,"#d0d0d2"],[397,525,32,90,"#cfd0d0"],[463,453,58,162,"#d5d5d5"],[521,453,85,256,"#fbfbfb"],
        [31,615,61,54,"#e7e7e7"],[31,669,61,102,"#e0e0e3"],[92,714,84,57,"#f2f2f2"],[176,615,54,108,"#e2e2e2"],[230,615,45,69,"#d8d8d8"],[275,615,44,69,"#e5e5e5"],[275,684,44,60,"#f1f1f1"],[230,684,45,162,"#e1e1e1"],[176,723,54,123,"#e0e3e2"],[319,615,45,168,"#dadada"],[364,684,99,99,"#e3e3e4"],[364,783,61,84,"#e2e5e9"],[425,783,38,84,"#f1f1f2"],[463,615,47,105,"#dfdfdf"],[510,615,48,105,"#efeff0"],[510,720,48,87,"#d8d8d9"],[510,807,48,57,"#fbfbfb"],[558,709,48,155,"#e0dfe0"],
        [31,771,61,162,"#dadadc"],[92,771,49,81,"#dddddd"],[141,771,35,81,"#d5d5d5"],[92,852,49,81,"#d3d3d3"],[141,852,35,81,"#ced0cf"],[176,846,54,87,"#dadada"],[230,846,45,87,"#d4d5d6"],[275,846,44,87,"#d3d1d5"],[275,744,44,102,"#d8d7d8"],[319,846,45,87,"#dadada"],[364,867,61,66,"#c9cacc"],[425,867,38,66,"#dddbdd"],[463,864,95,69,"#c8c9cb"],[558,864,48,69,"#c5c3c7"],
      ];
      const paymentMask = [
        [345,609,42,66,"#dcdde0"],[387,609,43,66,"#d7d7d9"],[430,609,58,66,"#dfdfe0"],[488,609,33,57,"#e4e5e6"],[521,609,33,57,"#dfe1e5"],[554,609,41,57,"#dddddb"],[595,609,36,57,"#e5e4e4"],[631,609,43,78,"#cbcbcc"],[674,609,42,78,"#d2d2d4"],[716,609,55,87,"#cbcbcd"],[771,609,79,70,"#dcdbdc"],
        [345,675,42,81,"#e7e7e9"],[387,675,43,81,"#f0f1f1"],[430,666,58,90,"#e6e5e4"],[488,666,33,54,"#dad9db"],[488,720,33,120,"#dedfe1"],[521,666,33,108,"#d4d5d8"],[554,666,31,54,"#d7d8d5"],[554,720,28,54,"#d6d7d9"],[585,666,46,54,"#e0e5e7"],[582,720,49,54,"#dcdcdd"],[631,687,140,69,"#f4f3f3"],[771,679,79,161,"#e3e3e4"],
        [345,756,85,84,"#d8dada"],[430,756,58,84,"#d5d5d6"],[521,774,61,66,"#dfe0e4"],[582,774,49,66,"#ececed"],[631,756,85,84,"#d6d6da"],[716,756,55,84,"#cfcfd3"],
        [345,840,85,165,"#d5d5d6"],[429,840,59,108,"#dedede"],[488,840,36,102,"#d9d9db"],[524,840,35,102,"#e0e1e6"],[559,840,72,165,"#cfcfd2"],[631,840,35,75,"#cecdcd"],[666,840,31,75,"#c8c8ca"],[697,840,34,75,"#cccccd"],[731,840,40,75,"#dcdee1"],[771,840,34,75,"#c2c2c2"],[805,840,42,75,"#dddede"],[847,840,68,75,"#c5c5c7"],
        [429,948,59,57,"#c5c3c5"],[488,942,36,63,"#cacacb"],[524,942,35,63,"#d0d0d4"],[631,915,66,159,"#e5e5e6"],[697,915,38,99,"#d5d5d6"],[735,915,36,99,"#e3e4e5"],[771,915,76,159,"#e4e6e7"],[847,915,68,75,"#d0d2d3"],[847,990,68,84,"#f3f3f4"],
      ];

      const drawMask = (cells) =>
        cells.map(([x, y, w, h, c]) => `<rect x="${x}" y="${y}" width="${w + 0.5}" height="${h + 0.5}" fill="${c}" />`).join("");

      const drawColumn = (col, i) => `
        <div class="relative flex h-full shrink-0 flex-col" style="width:${col.w}px">
          <div class="flex h-[37px] items-center border-b-2 border-[#d0d0d0] bg-[#fcfcfc]">
            <div class="flex h-[36px] flex-1 items-center justify-center overflow-hidden ${col.title.length > 25 ? "mx-[4px]" : "pt-px pr-[1px]"}">
              ${col.eye ? `<svg class="absolute top-[10px] ${i ? "left-[1px]" : "left-[4px]"} h-[16px] w-[22px]"><use href="#eye" /></svg>` : ""}
              <span class="${col.link ? "border-b-2 border-[#3f9ad0] leading-[22px] text-[#2b8fcf]" : ""}">${col.title}</span>
              ${col.lock ? '<svg class="absolute top-[9px] right-[10px] h-[21px] w-[18px]"><use href="#lock" /></svg>' : ""}
            </div>
            <div class="h-[22px] w-[2px] bg-[#dcdcdc]"></div>
          </div>
          <div class="flex-1 border-r-2 border-[#d2d2d2]/80 pt-[1.500px]">
            ${col.rows.map((text) => `<div class="h-[35.200px] leading-[36px] ${col.right ? "pr-[6px] text-right" : i ? "pl-[5px]" : "pl-[8px] tracking-[0.100px] [font-kerning:none]"}">${text}</div>`).join("")}
          </div>
        </div>`;

      document.getElementById("grid-invoicing").innerHTML =
        '<div class="absolute top-[37px] left-[2px] h-[36px] w-[2818px] border-2 border-dotted border-[#3c4a55] bg-[#d8e7f1]"></div>' +
        invoicing.map(drawColumn).join("") +
        '<div class="h-[37px] flex-1 border-b-2 border-[#dcdcdc] bg-[#fcfcfc]"></div>' +
        `<svg class="absolute top-[37px] left-[192px] h-[211px] w-[330px]" viewBox="31 299 575 634" preserveAspectRatio="none">${drawMask(invoicingMask)}</svg>`;
      document.getElementById("grid-payment").innerHTML =
        payment.map(drawColumn).join("") +
        `<svg class="absolute top-[38px] left-[192px] h-[155px] w-[327px]" viewBox="345 609 570 465" preserveAspectRatio="none">${drawMask(paymentMask)}</svg>`;
      document.getElementById("customer-mask").innerHTML = drawMask(customerMask);
    </script>
  </body>
</html>
